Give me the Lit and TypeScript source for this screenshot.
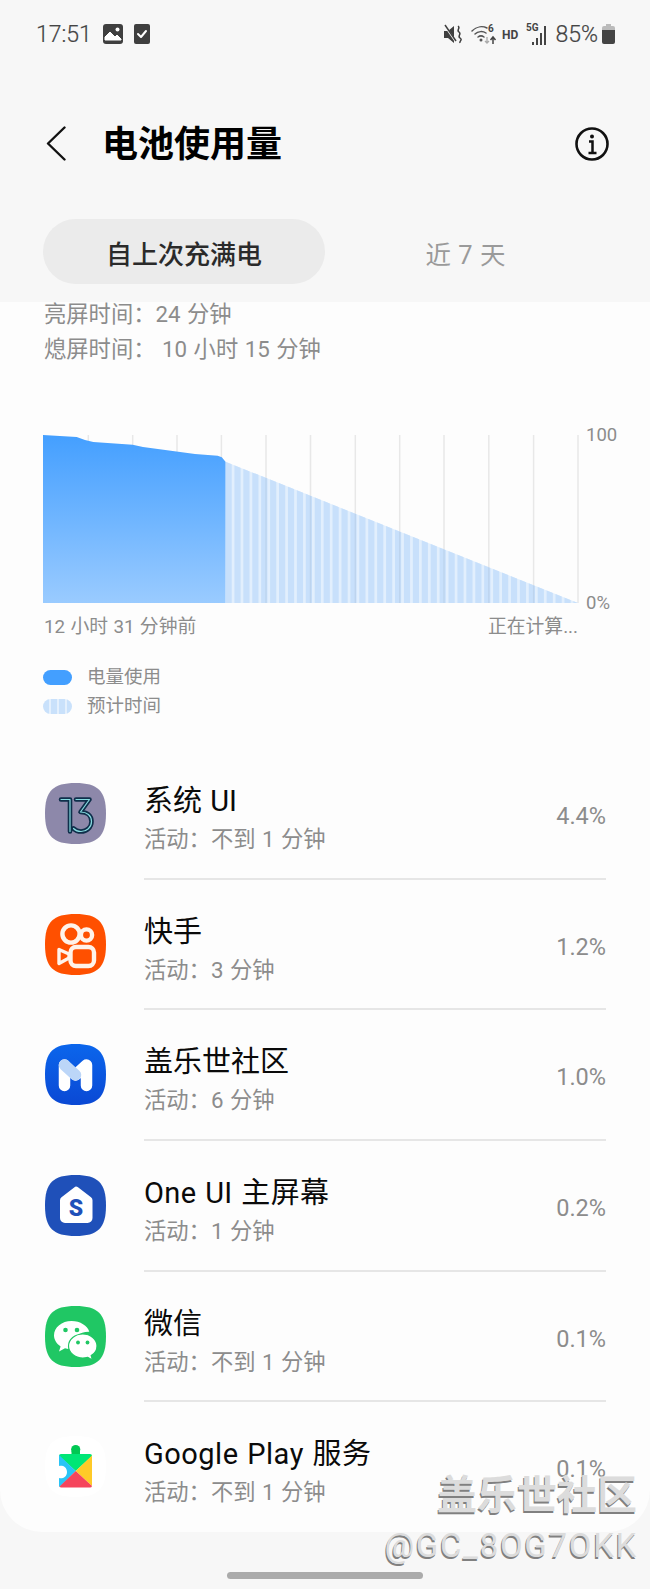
import { LitElement, html, css, svg } from "lit";
import { customElement } from "lit/decorators.js";

const SQ = "M30.5 0C53 0 61 8 61 30.5S53 61 30.5 61 0 53 0 30.5 8 0 30.5 0Z";
const D13 = "M16 16.500h9v32M31 16.500h13.500l-9 12.500c6.500 0 11 3.500 11 9.500s-5 10-10.500 10c-3 0-5.500-1-7.500-3";

const icons: Record<string, unknown> = {
  android: svg`<path d=${SQ} fill="#8d88aa"/>
    <g fill="none" stroke-linejoin="round" stroke-linecap="round">
      <path d=${D13} stroke="#0f2f4b" stroke-width="4.600"/>
      <path d=${D13} stroke="#86dbe0" stroke-width="1.200"/></g>`,
  kuaishou: svg`<path d=${SQ} fill="#ff5000"/>
    <g fill="none" stroke="#fff3ea" stroke-width="4.400">
      <circle cx="26" cy="20" r="8.600"/><circle cx="41.500" cy="21" r="5.600"/>
      <rect x="25.500" y="33" width="23.500" height="19" rx="5.500"/></g>
    <path d="M14 35.500l10 4.500v4l-10 5.500z" fill="none" stroke="#fff3ea" stroke-linejoin="round" stroke-width="3.400"/>`,
  meta: svg`<defs><linearGradient id="mg" x1="0" y1="0" x2="0" y2="1"><stop offset="0" stop-color="#0b66ec"/><stop offset="1" stop-color="#0a48d4"/></linearGradient></defs>
    <path d=${SQ} fill="url(#mg)"/>
    <g fill="none" stroke-width="11.500" stroke-linecap="round" stroke-linejoin="round">
      <path d="M19.500 21v20.500M41.500 41.500V21L30.500 31" stroke="#fff"/>
      <path d="M19.500 21L30.500 31" stroke="#bcd6f8"/></g>`,
  oneui: svg`<path d=${SQ} fill="#1f50b9"/>
    <path d="M31 11.500a3 3 0 0 1 2 .8l13 10a4 4 0 0 1 1.500 3V43a5 5 0 0 1-5 5H20a5 5 0 0 1-5-5V25.300a4 4 0 0 1 1.500-3l13-10a3 3 0 0 1 1.500-.8Z" fill="#fff"/>
    <text x="31" y="41" text-anchor="middle" font-family="Roboto,'Liberation Sans',sans-serif" font-weight="900" font-size="23" fill="#1f50b9">S</text>`,
  wechat: svg`<path d=${SQ} fill="#20c764"/>
    <path d="M26.500 15c-9.600 0-17.500 6.400-17.500 14.300 0 4.500 2.600 8.500 6.600 11.100l-1.600 5.100 6-3.200c2 .6 4.200.9 6.500.9l1.600-.1c-.5-1.400-.7-2.800-.7-4.200 0-7.300 7.200-13.200 16.100-13.200l.8.100C42.600 19.800 35.300 15 26.500 15Z" fill="#fff"/>
    <circle cx="20.500" cy="24" r="2.300" fill="#20c764"/><circle cx="32" cy="24" r="2.300" fill="#20c764"/>
    <path d="M52 40c0-6.600-6.400-12-14.200-12S23.500 33.400 23.500 40s6.400 12 14.300 12c1.700 0 3.400-.3 4.900-.7l4.800 2.700-1.300-4.400C50 47.500 52 44 52 40Z" fill="#fff" stroke="#20c764" stroke-width="1.200"/>
    <circle cx="33" cy="36.500" r="1.900" fill="#20c764"/><circle cx="42.500" cy="36.500" r="1.900" fill="#20c764"/>`,
  play: svg`<path d=${SQ} fill="#fff"/>
    <circle cx="30.700" cy="13.500" r="4.600" fill="#00c853"/>
    <path d="M26.500 15h8.500v4h-8.500z" fill="#00c853"/>
    <path d="M14 20a2 2 0 0 1 2-2h29a2 2 0 0 1 2 2L30.700 35Z" fill="#00e676"/>
    <path d="M14 19L30.700 35 14.500 51c-.3-.3-.5-.7-.5-1.200V42c3 1 8-.500 8-6s-5-7-8-6Z" fill="#29c4f6"/>
    <path d="M47 19.500L30.700 35 47 50Z" fill="#ffca28"/>
    <path d="M30.700 35L47 50a2 2 0 0 1-2 1.500H16.500a2 2 0 0 1-2-1Z" fill="#f5455c"/>`,
};

const rows = [
  { icon: "android", name: html`系统 UI`, sub: "活动：不到 1 分钟", pct: "4.4%" },
  { icon: "kuaishou", name: html`快手`, sub: "活动：3 分钟", pct: "1.2%" },
  { icon: "meta", name: html`盖乐世社区`, sub: "活动：6 分钟", pct: "1.0%" },
  { icon: "oneui", name: html`<span class="lat">One UI</span> 主屏幕`, sub: "活动：1 分钟", pct: "0.2%" },
  { icon: "wechat", name: html`微信`, sub: "活动：不到 1 分钟", pct: "0.1%" },
  { icon: "play", name: html`<span class="lat">Google Play</span> 服务`, sub: "活动：不到 1 分钟", pct: "0.1%" },
];

const grid = [45.3, 89.7, 134, 178.4, 223, 267.5, 312.3, 356.7, 401, 445.8, 490.6, 535];

@customElement("app-root")
export class AppRoot extends LitElement {
  static styles = css`
    :host {
      display: block;
      width: 650px;
      height: 1589px;
      position: relative;
      overflow: hidden;
      background: #f7f7f7;
      font-family: Roboto, "Noto Sans CJK SC", sans-serif;
      color: #000;
    }
    .status {
      height: 66px;
      box-sizing: border-box;
      padding: 2px 35px 0 36px;
      display: flex;
      align-items: center;
      color: #444;
    }
    .time { font-size: 23px; width: 67px; font-weight: 300; -webkit-text-stroke: 0.2px #444; }
    .status svg { display: block; overflow: visible; }
    .check { margin-left: 11px; }
    .spacer { flex: 1; }
    .mute { margin-right: 9px; }
    .wifi { margin-right: 5px; }
    .hd { margin-right: 8px; }
    .net { margin-right: 6px; }
    .pct { font-size: 23px; font-weight: 300; -webkit-text-stroke: 0.2px #444; margin-right: 4px; }
    .header {
      display: flex;
      align-items: center;
      padding: 58px 41px 53px 46px;
      height: 42px;
    }
    .header svg { margin-bottom: 3px; }
    .title { font-size: 36px; font-weight: 700; margin-left: 36px; flex: 1; line-height: 42px; }
    .tabs { display: flex; padding: 0 44px 0 43px; height: 65px; }
    .tab {
      flex: 1;
      display: flex;
      align-items: center;
      justify-content: center;
      font-size: 25.500px;
      word-spacing: 1px;
      color: #9a9a9a;
      padding-top: 1px;
    }
    .tab.on {
      flex: 0 0 282px;
      background: #ebebeb;
      border-radius: 33px;
      color: #2a2a2a;
      font-weight: 500;
      font-size: 26px;
    }
    .card {
      margin-top: 18px;
      height: 1230px;
      background: #fdfdfd;
      border-radius: 0 0 42px 42px;
      overflow: hidden;
    }
    .stat { font-size: 22.300px; line-height: 35px; color: #8c8c8c; padding-left: 44px; word-spacing: 1px; }
    .stat:first-child { margin-top: -5.500px; }
    .chart { display: flex; margin: 68.500px 0 0 43px; height: 168px; }
    .chart svg { display: block; flex: none; }
    .axis {
      display: flex;
      flex-direction: column;
      justify-content: space-between;
      margin: -10px 0 -10px 7px;
      font-size: 18.500px;
      line-height: 20px;
      color: #8c8c8c;
    }
    .xlabels {
      display: flex;
      justify-content: space-between;
      width: 534px;
      margin: 13px 0 0 44px;
      font-size: 18.800px;
      line-height: 22px;
      color: #8c8c8c;
      word-spacing: 0.700px;
    }
    .legend { margin: 25px 0 0 43px; font-size: 18.500px; color: #8c8c8c; line-height: 29px; }
    .lg { display: flex; align-items: center; gap: 15px; }
    .sw { width: 29px; height: 15px; border-radius: 8px; background: #439fff; flex: none; }
    .sw.est {
      background: repeating-linear-gradient(90deg, #c9e1fb 0 6px, #e4f0fd 6px 8px);
    }
    .rows { margin-top: 28px; }
    .row { display: flex; height: 130.700px; padding-right: 44px; }
    .ico { flex: none; width: 61px; height: 61px; margin: 34px 38px 0 45px; display: block; }
    .body { flex: 1; display: flex; border-bottom: 2px solid #e6e6e6; box-sizing: border-box; min-width: 0; }
    .row:last-child .body { border-bottom: 0; }
    .txt { flex: 1; padding-top: 34px; }
    .name { font-size: 29px; line-height: 36px; color: #0a0a0a; word-spacing: 1px; }
    .sub { font-size: 22.300px; line-height: 30px; margin-top: 5px; color: #8c8c8c; word-spacing: 1px; }
    .val { font-size: 23.500px; color: #8c8c8c; padding-top: 52px; line-height: 30px; }
    .pill {
      position: absolute;
      left: 227px;
      top: 1572px;
      width: 196px;
      height: 7px;
      border-radius: 4px;
      background: #ababab;
    }
    .wm {
      position: absolute;
      right: 13px;
      top: 1470px;
      text-align: right;
      color: #dcdcdc;
      text-shadow: -1px 1.500px 0 #808080;
    }
    .wm1 { font-size: 40px; line-height: 52px; font-weight: 700; letter-spacing: 0; }
    .wm2 { font-size: 33px; line-height: 40px; margin-top: 4px; letter-spacing: 1.700px; margin-right: -1px; }
  `;

  private statusLeft() {
    return html`
      <span class="time">17:51</span>
      <svg width="20" height="20" viewBox="0 0 20 20">
        <rect width="20" height="20" rx="3" fill="#3f3f3f"/>
        <circle cx="14.500" cy="5.500" r="2" fill="#fff"/>
        <path d="M2 16v-3l5-5 5 5 2-2 4 4v1z" fill="#fff" stroke="#fff" stroke-width="1" stroke-linejoin="round"/>
      </svg>
      <svg class="check" width="16" height="20" viewBox="0 0 16 20">
        <rect width="16" height="20" rx="2" fill="#3f3f3f"/>
        <path d="M4 10l3 3 5-6" fill="none" stroke="#fff" stroke-width="2" stroke-linecap="round" stroke-linejoin="round"/>
      </svg>`;
  }

  private statusRight() {
    return html`
      <svg class="mute" width="18" height="19" viewBox="0 0 18 19">
        <path d="M0 6h4l6-5v17l-6-5H0z" fill="#3f3f3f"/>
        <path d="M1 1l11 16" stroke="#f7f7f7" stroke-width="2"/>
        <path d="M1 0l11 16" stroke="#3f3f3f" stroke-width="1.500"/>
        <path d="M14 1c3 2-2 4 1 6s-2 4 1 6-1 3 0 5" fill="none" stroke="#3f3f3f" stroke-width="1.500"/>
      </svg>
      <svg class="wifi" width="26" height="22" viewBox="0 0 26 22">
        <g fill="none" stroke="#555" stroke-width="1.500" stroke-linecap="round">
          <path d="M1 8c5-5 11-5 15-3"/><path d="M4 11c3-3 8-3 11-1"/><path d="M7 14c2-1.500 4-1.500 6 0"/>
        </g>
        <circle cx="10" cy="17" r="1.500" fill="#555"/>
        <text x="17" y="9" font-size="10" font-weight="700" fill="#444" font-family="Roboto,sans-serif">6</text>
        <path d="M16 14v6m-2-2l2 2 2-2" fill="none" stroke="#aaa" stroke-width="1.300"/>
        <path d="M22 21v-7m-2.500 3l2.500-3 2.500 3" fill="none" stroke="#444" stroke-width="1.500"/>
      </svg>
      <svg class="hd" width="16" height="14" viewBox="0 0 16 14"><text x="0" y="12" font-size="12" font-weight="700" fill="#444" font-family="Roboto,sans-serif">HD</text></svg>
      <svg class="net" width="23" height="24" viewBox="0 0 23 24">
        <text x="0" y="9" font-size="10" font-weight="700" fill="#444" font-family="Roboto,sans-serif">5G</text>
        <g fill="#444">
          <rect x="6" y="20" width="2" height="3"/><rect x="10" y="16" width="2" height="7"/>
          <rect x="14" y="11" width="2" height="12"/><rect x="18" y="4" width="2" height="19"/>
        </g>
      </svg>
      <span class="pct">85%</span>
      <svg width="13" height="20" viewBox="0 0 13 20">
        <path d="M4 0h5v2H4z" fill="#bbb"/><path d="M2 2h9a2 2 0 0 1 2 2v3H0V4a2 2 0 0 1 2-2z" fill="#bbb"/>
        <path d="M0 6h13v12a2 2 0 0 1-2 2H2a2 2 0 0 1-2-2z" fill="#444"/>
      </svg>`;
  }

  private chart() {
    const w = 536, h = 168;
    const stripes = [];
    for (let x = 182.5; x < 536; x += 8.92) stripes.push(svg`<rect x=${x} y="0" width="6.200" height=${h} fill="#c8e0fb"/>`);
    return svg`<svg width=${w} height=${h} viewBox="0 0 ${w} ${h}">
      <defs>
        <linearGradient id="bl" x1="0" y1="0" x2="0" y2="1">
          <stop offset="0" stop-color="#449fff"/><stop offset="1" stop-color="#9acbff"/>
        </linearGradient>
        <clipPath id="est"><path d="M182.500 26.700L535 168H182.500Z"/></clipPath>
      </defs>
      ${grid.map((x) => svg`<rect x=${x - 0.75} y="0" width="1.500" height=${h} fill="#e8e8e8"/>`)}
      <g clip-path="url(#est)">
        <rect x="182.500" y="0" width="353" height=${h} fill="#e2effd"/>
        ${stripes}
        ${grid.map((x) => svg`<rect x=${x - 0.75} y="0" width="1.500" height=${h} fill="#000" opacity=".05"/>`)}
      </g>
      <path d="M0 0L33.700 2 42 5 50.300 7 89.700 9.700 100 12 152 19 174.700 20.700 178.800 22.300 182.500 26.700V168H0Z" fill="url(#bl)"/>
    </svg>`;
  }

  render() {
    return html`
      <div class="status">
        ${this.statusLeft()}
        <span class="spacer"></span>
        ${this.statusRight()}
      </div>
      <div class="header">
        <svg width="20" height="35" viewBox="0 0 20 35">
          <path d="M18.500 1.500L2 17.500 18.500 33.500" fill="none" stroke="#111" stroke-width="2.400" stroke-linecap="round" stroke-linejoin="round"/>
        </svg>
        <div class="title">电池使用量</div>
        <svg width="34" height="34" viewBox="0 0 34 34">
          <circle cx="17" cy="17" r="15.500" fill="none" stroke="#111" stroke-width="2.600"/>
          <circle cx="17" cy="9.500" r="2" fill="#111"/>
          <path d="M14 14.500h3.500V26M13.500 26h8" fill="none" stroke="#111" stroke-width="2.500"/>
        </svg>
      </div>
      <div class="tabs">
        <div class="tab on">自上次充满电</div>
        <div class="tab">近 7 天</div>
      </div>
      <div class="card">
        <div class="stat">亮屏时间：24 分钟</div>
        <div class="stat">熄屏时间： 10 小时 15 分钟</div>
        <div class="chart">
          ${this.chart()}
          <div class="axis"><span>100</span><span>0%</span></div>
        </div>
        <div class="xlabels"><span>12 小时 31 分钟前</span><span>正在计算...</span></div>
        <div class="legend">
          <div class="lg"><span class="sw"></span><span>电量使用</span></div>
          <div class="lg"><span class="sw est"></span><span>预计时间</span></div>
        </div>
        <div class="rows">
          ${rows.map(
            (r) => html`<div class="row">
              <svg class="ico" viewBox="0 0 61 61">${icons[r.icon]}</svg>
              <div class="body">
                <div class="txt">
                  <div class="name" style=${r.icon === "play" ? "letter-spacing:.5px" : r.icon === "oneui" ? "letter-spacing:.4px" : ""}>${r.name}</div>
                  <div class="sub">${r.sub}</div>
                </div>
                <div class="val">${r.pct}</div>
              </div>
            </div>`
          )}
        </div>
      </div>
      <div class="pill"></div>
      <div class="wm">
        <div class="wm1">盖乐世社区</div>
        <div class="wm2">@GC_8OG7OKK</div>
      </div>
    `;
  }
}
